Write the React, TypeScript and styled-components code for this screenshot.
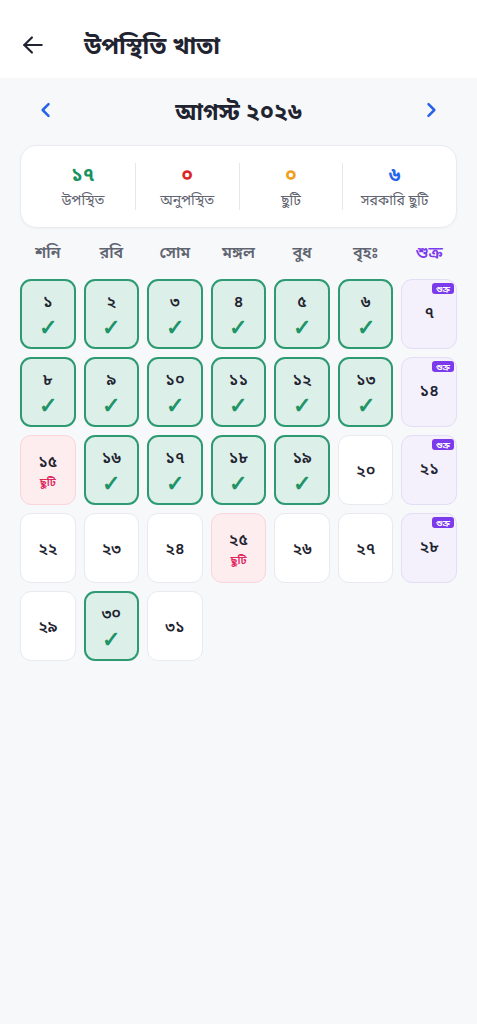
import React from "react";
import styled, { createGlobalStyle, css } from "styled-components";

const GlobalStyle = createGlobalStyle`
  * { box-sizing: border-box; }
  html, body { margin: 0; padding: 0; background: #f7f8fa; }
  body { font-family: "Noto Sans", "Noto Sans Bengali", sans-serif; color: #1f2430; }
`;

const Page = styled.div`
  min-height: 1024px;
  background: #f7f8fa;
`;

const Header = styled.header`
  height: 78px;
  background: #ffffff;
  display: flex;
  align-items: center;
  padding: 12px 20px 0 20px;
  gap: 38px;
`;

const IconButton = styled.button<{ $color?: string }>`
  border: none;
  background: transparent;
  padding: 0;
  display: flex;
  align-items: center;
  justify-content: center;
  color: ${(p) => p.$color || "#1f2430"};
  cursor: pointer;
`;

const Title = styled.h1`
  margin: 0;
  font-size: 24px;
  font-weight: 700;
  color: #1f2430;
  padding-top: 2px;
`;

const MonthNav = styled.div`
  display: flex;
  align-items: center;
  justify-content: space-between;
  padding: 0 36px;
  height: 64px;
`;

const MonthTitle = styled.div`
  font-size: 23px;
  font-weight: 700;
  color: #1f2430;
  padding-top: 4px;
`;

const StatsCard = styled.div`
  margin: 3px 20px 0 20px;
  height: 83px;
  background: #ffffff;
  border: 1px solid #e9ebef;
  border-radius: 16px;
  display: grid;
  grid-template-columns: repeat(4, 1fr);
  align-items: center;
  padding: 0 10px;
  box-shadow: 0 1px 3px rgba(0,0,0,0.03);
`;

const Stat = styled.div<{ $divider?: boolean }>`
  display: flex;
  flex-direction: column;
  align-items: center;
  gap: 5px;
  ${(p) => p.$divider && css`border-left: 1px solid #e6e8ec;`}
`;

const StatValue = styled.div<{ $color: string }>`
  font-size: 19px;
  font-weight: 700;
  color: ${(p) => p.$color};
  line-height: 22px;
`;

const StatLabel = styled.div`
  font-size: 14px;
  color: #5f6470;
  line-height: 20px;
`;

const Weekdays = styled.div`
  display: grid;
  grid-template-columns: repeat(7, 1fr);
  gap: 8px;
  padding: 0 20px;
  margin-top: 12px;
  height: 26px;
  align-items: center;
`;

const Weekday = styled.div<{ $accent?: boolean }>`
  text-align: center;
  font-size: 16px;
  font-weight: 600;
  color: ${(p) => (p.$accent ? "#7c3aed" : "#5f6470")};
`;

const Grid = styled.div`
  display: grid;
  grid-template-columns: repeat(7, 1fr);
  grid-auto-rows: 70px;
  gap: 8px;
  padding: 0 20px;
  margin-top: 13px;
`;

type Kind = "present" | "holiday" | "leave" | "empty";

const Cell = styled.div<{ $kind: Kind }>`
  position: relative;
  border-radius: 11px;
  display: flex;
  flex-direction: column;
  align-items: center;
  justify-content: center;
  ${(p) =>
    p.$kind === "present" &&
    css`
      background: #dcefe8;
      border: 2px solid #2e9a72;
      gap: 4px;
    `}
  ${(p) =>
    p.$kind === "holiday" &&
    css`
      background: #f4f1fd;
      border: 1px solid #e3ddf5;
      padding-bottom: 4px;
    `}
  ${(p) =>
    p.$kind === "leave" &&
    css`
      background: #fdedef;
      border: 1px solid #f8d6db;
      gap: 4px;
    `}
  ${(p) =>
    p.$kind === "empty" &&
    css`
      background: #ffffff;
      border: 1px solid #e8eaee;
    `}
`;

const DayNum = styled.div`
  font-size: 16px;
  font-weight: 600;
  color: #1f2430;
  line-height: 20px;
`;

const Check = styled.div`
  font-size: 22px;
  font-weight: 700;
  color: #1e9467;
  line-height: 22px;
`;

const LeaveTag = styled.div`
  font-size: 11px;
  font-weight: 600;
  color: #e0245e;
  line-height: 14px;
`;

const Badge = styled.span`
  position: absolute;
  top: 3px;
  right: 2px;
  background: #7c3aed;
  color: #ffffff;
  font-size: 8px;
  font-weight: 700;
  line-height: 11px;
  padding: 0 4px;
  border-radius: 3px;
`;

const bn = (n: number) =>
  String(n).replace(/\d/g, (d) => "০১২৩৪৫৬৭৮৯"[Number(d)]);

const leave = new Set([15, 25]);
const fridays = new Set([7, 14, 21, 28]);
const empty = new Set([20, 22, 23, 24, 26, 27, 29, 31]);

const days: { n: number; kind: Kind }[] = Array.from({ length: 31 }, (_, i) => {
  const n = i + 1;
  let kind: Kind = "present";
  if (fridays.has(n)) kind = "holiday";
  else if (leave.has(n)) kind = "leave";
  else if (empty.has(n)) kind = "empty";
  return { n, kind };
});

const weekdays = ["শনি", "রবি", "সোম", "মঙ্গল", "বুধ", "বৃহঃ", "শুক্র"];

export default function App() {
  return (
    <Page>
      <GlobalStyle />
      <Header>
        <IconButton aria-label="back">
          <svg width="26" height="26" viewBox="0 0 24 24" fill="none" stroke="#1f2430" strokeWidth="2" strokeLinecap="round" strokeLinejoin="round">
            <path d="M20 12H4" />
            <path d="M11 5l-7 7 7 7" />
          </svg>
        </IconButton>
        <Title>উপস্থিতি খাতা</Title>
      </Header>
      <MonthNav>
        <IconButton $color="#2563eb" aria-label="prev">
          <svg width="20" height="20" viewBox="0 0 24 24" fill="none" stroke="currentColor" strokeWidth="3" strokeLinecap="round" strokeLinejoin="round">
            <path d="M15 5l-7 7 7 7" />
          </svg>
        </IconButton>
        <MonthTitle>আগস্ট ২০২৬</MonthTitle>
        <IconButton $color="#2563eb" aria-label="next">
          <svg width="20" height="20" viewBox="0 0 24 24" fill="none" stroke="currentColor" strokeWidth="3" strokeLinecap="round" strokeLinejoin="round">
            <path d="M9 5l7 7-7 7" />
          </svg>
        </IconButton>
      </MonthNav>
      <StatsCard>
        <Stat>
          <StatValue $color="#16925f">১৭</StatValue>
          <StatLabel>উপস্থিত</StatLabel>
        </Stat>
        <Stat $divider>
          <StatValue $color="#dc2626">০</StatValue>
          <StatLabel>অনুপস্থিত</StatLabel>
        </Stat>
        <Stat $divider>
          <StatValue $color="#f0a020">০</StatValue>
          <StatLabel>ছুটি</StatLabel>
        </Stat>
        <Stat $divider>
          <StatValue $color="#2563eb">৬</StatValue>
          <StatLabel>সরকারি ছুটি</StatLabel>
        </Stat>
      </StatsCard>
      <Weekdays>
        {weekdays.map((w, i) => (
          <Weekday key={w} $accent={i === 6}>{w}</Weekday>
        ))}
      </Weekdays>
      <Grid>
        {days.map((d) => (
          <Cell key={d.n} $kind={d.kind}>
            {d.kind === "holiday" && <Badge>শুক্র</Badge>}
            <DayNum>{bn(d.n)}</DayNum>
            {d.kind === "present" && <Check>✓</Check>}
            {d.kind === "leave" && <LeaveTag>ছুটি</LeaveTag>}
          </Cell>
        ))}
      </Grid>
    </Page>
  );
}
